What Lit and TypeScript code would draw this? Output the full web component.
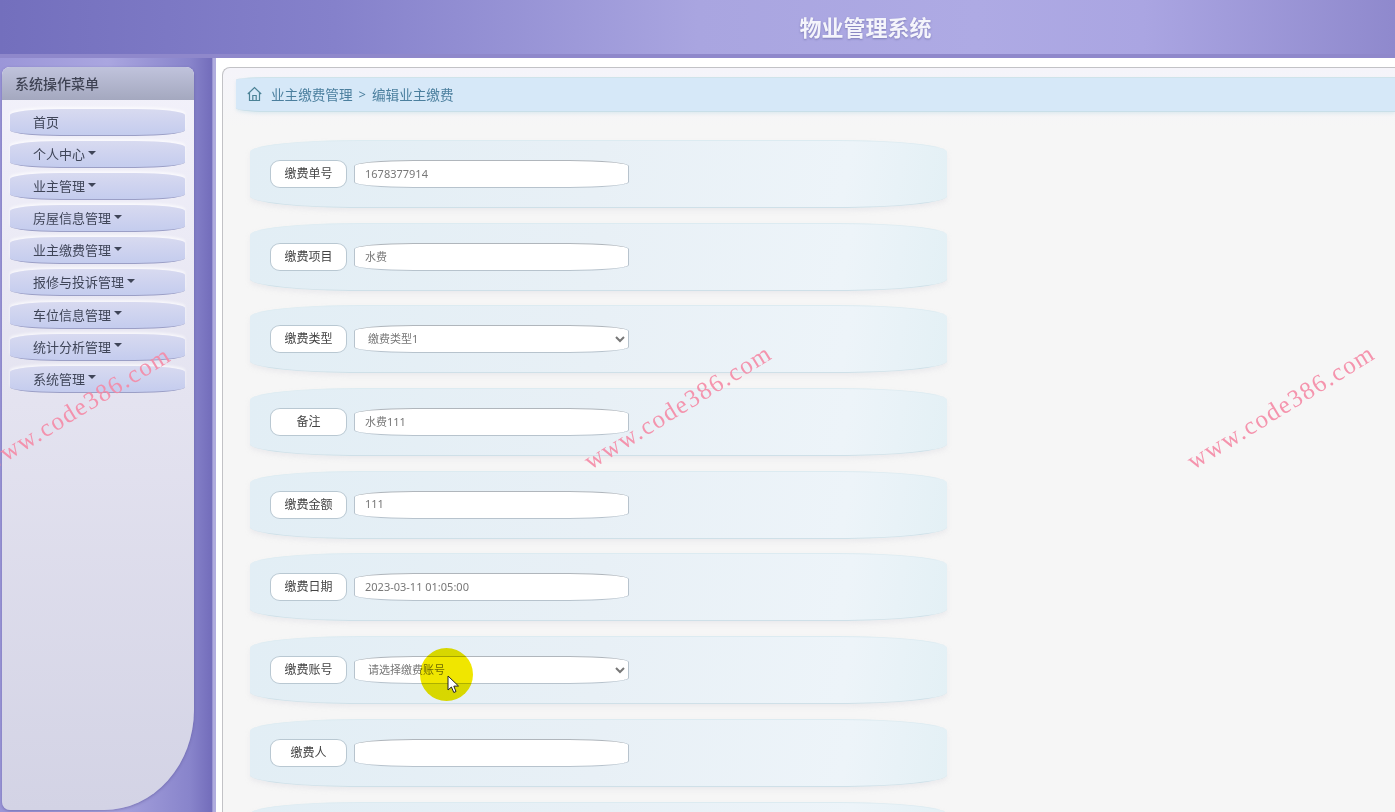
import { LitElement, html, css } from "lit";
import { customElement } from "lit/decorators.js";

const menu = [
  ["首页", false],
  ["个人中心", true],
  ["业主管理", true],
  ["房屋信息管理", true],
  ["业主缴费管理", true],
  ["报修与投诉管理", true],
  ["车位信息管理", true],
  ["统计分析管理", true],
  ["系统管理", true],
] as [string, boolean][];

type Field = { label?: string; value?: string; options?: string };
const fields: Field[] = [
  { label: "缴费单号", value: "1678377914" },
  { label: "缴费项目", value: "水费" },
  { label: "缴费类型", options: "缴费类型1" },
  { label: "备注", value: "水费111" },
  { label: "缴费金额", value: "111" },
  { label: "缴费日期", value: "2023-03-11 01:05:00" },
  { label: "缴费账号", options: "请选择缴费账号" },
  { label: "缴费人", value: "" },
  {},
];

@customElement("app-root")
export class AppRoot extends LitElement {
  static styles = css`
    :host {
      display: block;
      position: relative;
      width: 1395px;
      height: 812px;
      overflow: hidden;
      background: #fff;
      font-family: "Noto Sans", "Noto Sans CJK SC", sans-serif;
      color: #444;
    }
    .top {
      height: 54px;
      border-bottom: 4px solid #8f88cb;
      box-sizing: content-box;
      background: linear-gradient(90deg, #736fbd 0%, #8581cb 24%, #a9a5e0 50%, #aeaae4 70%, #aaa5e2 82%, #8f89cd 100%);
      display: flex;
      align-items: center;
      justify-content: center;
      padding-left: 336px;
    }
    .top h1 {
      margin: 0;
      font-size: 22px;
      line-height: 54px;
      font-weight: 700;
      color: #f4f4fb;
      text-shadow: 0 1px 2px rgba(70, 70, 130, 0.45);
    }
    .body {
      display: flex;
      height: 754px;
    }
    .side {
      width: 216px;
      flex: none;
      box-sizing: border-box;
      padding: 9px 0 0 2px;
      background: linear-gradient(90deg, #9b96d8 0%, #aaa6e0 50%, #8884cb 88%, #736dbb 98%, #b0acde 98.6%);
    }
    .panel {
      width: 192px;
      height: 743px;
      border-radius: 8px 8px 90px 8px / 8px 8px 100px 8px;
      background: linear-gradient(180deg, #f3f2fb 0%, #e4e3f0 45%, #d3d3e5 100%);
      box-shadow: 0 1px 3px rgba(70, 65, 130, 0.45);
      overflow: hidden;
    }
    .panel h2 {
      margin: 0;
      height: 33px;
      line-height: 34px;
      padding-left: 13px;
      font-size: 14px;
      font-weight: 500;
      color: #3f4354;
      background: linear-gradient(180deg, #c0c3dc 0%, #a4a8bf 100%);
    }
    nav {
      display: flex;
      flex-direction: column;
      gap: 5.1px;
      padding: 9px 9px 0 8px;
    }
    .item {
      height: 27px;
      line-height: 26px;
      padding-left: 23px;
      font-size: 13px;
      color: #3f4558;
      border-radius: 50px / 6px;
      background: linear-gradient(180deg, #d8daf0 0%, #c4ccee 100%);
      border-bottom: 1px solid #9b9fc6;
      box-shadow: 0 -2px 3px rgba(255, 255, 255, 0.7);
      box-sizing: border-box;
      display: flex;
      align-items: center;
      gap: 3px;
    }
    .caret {
      width: 0;
      height: 0;
      border-left: 4px solid transparent;
      border-right: 4px solid transparent;
      border-top: 4px solid #3f4558;
      margin-top: -3px;
    }
    .main {
      flex: 1;
      min-width: 0;
      padding: 9px 0 0 6px;
      background: #fff;
    }
    .card {
      height: 800px;
      box-sizing: border-box;
      border: 1px solid #c2c2c6;
      border-right: none;
      border-radius: 8px 0 0 0;
      background: linear-gradient(180deg, #f5f4fa 0, #f6f6f6 60px);
      padding: 9px 0 0 13px;
    }
    .crumb {
      height: 35px;
      display: flex;
      align-items: center;
      border-radius: 30px 0 0 30px / 3px 0 0 4px;
      background: #d6e8f8;
      border-top: 1px solid #cfe3ea;
      border-bottom: 1px solid #c9dfe8;
      box-shadow: 0 2px 3px rgba(205, 225, 235, 0.5);
      box-sizing: border-box;
      padding: 0 0 2px 11px;
      font-size: 13.6px;
      color: #4b7f9e;
    }
    .crumb svg {
      margin-right: 9px;
    }
    .crumb .sep {
      margin: 0 6px;
      font-size: 13px;
    }
    form {
      margin: 28px 0 0 14px;
      width: 697px;
      display: flex;
      flex-direction: column;
      gap: 14.7px;
    }
    .row {
      height: 68px;
      flex: none;
      box-sizing: border-box;
      display: flex;
      align-items: center;
      gap: 7px;
      padding: 0 0 0 20px;
      border-radius: 110px / 12px;
      background: linear-gradient(100deg, #e2eef5 0%, #e8f0f6 50%, #edf4f9 85%, #e3f0f5 100%);
      border-top: 1px solid #dcebf1;
      border-bottom: 1px solid #cfe0e8;
      box-shadow: 0 3px 4px rgba(225, 225, 232, 0.55);
    }
    .label {
      width: 77px;
      height: 28px;
      line-height: 26px;
      box-sizing: border-box;
      text-align: center;
      font-size: 12px;
      color: #444;
      background: #fff;
      border: 1px solid #b9c8d2;
      border-radius: 10px / 9px;
      flex: none;
    }
    input,
    select {
      width: 275px;
      height: 28px;
      box-sizing: border-box;
      background: #fff;
      border: 1px solid #b7c3cd;
      border-top-color: #b0b6bc;
      border-radius: 60px / 6px;
      font: 11px "Noto Sans", "Noto Sans CJK SC", sans-serif;
      color: #777;
      padding: 0 10px 2px;
      outline: none;
      flex: none;
    }
    select {
      padding-left: 9px;
    }
    .wm {
      position: absolute;
      font: 25px "Liberation Serif", serif;
      letter-spacing: 1.5px;
      color: #f58aa6;
      white-space: nowrap;
      transform: translate(-50%, -50%) rotate(-31.5deg);
      pointer-events: none;
      opacity: 0.9;
    }
    .spot {
      position: absolute;
      left: 420px;
      top: 648px;
      width: 53px;
      height: 53px;
      border-radius: 50%;
      background: #f0e600;
      mix-blend-mode: multiply;
    }
    .cursor {
      position: absolute;
      left: 447px;
      top: 675px;
    }
  `;

  render() {
    return html`
      <header class="top"><h1>物业管理系统</h1></header>
      <div class="body">
        <aside class="side">
          <div class="panel">
            <h2>系统操作菜单</h2>
            <nav>
              ${menu.map(
                ([t, c]) => html`<div class="item">${t}${c ? html`<span class="caret"></span>` : ""}</div>`
              )}
            </nav>
          </div>
        </aside>
        <main class="main">
          <div class="card">
            <div class="crumb">
              <svg width="15" height="16" viewBox="0 0 15 16" fill="none" stroke="#4b8296" stroke-width="1.2">
                <path d="M0.8 8 L7.5 1.5 L14.2 8" />
                <path d="M2.5 6.8 V14.5 H12.5 V6.8" />
                <path d="M5.8 14.5 V9.5 H9.2 V14.5" />
              </svg>
              <span>业主缴费管理</span><span class="sep">&gt;</span><span>编辑业主缴费</span>
            </div>
            <form>
              ${fields.map(
                (f) => html`<div class="row">
                  ${f.label ? html`<span class="label">${f.label}</span>` : ""}
                  ${f.label
                    ? f.options
                      ? html`<select><option>${f.options}</option></select>`
                      : html`<input type="text" .value=${f.value ?? ""} />`
                    : ""}
                </div>`
              )}
            </form>
          </div>
        </main>
      </div>
      <div class="wm" style="left:77px;top:409px">www.code386.com</div>
      <div class="wm" style="left:678px;top:407px">www.code386.com</div>
      <div class="wm" style="left:1281px;top:407px">www.code386.com</div>
      <div class="spot"></div>
      <svg class="cursor" width="13" height="19" viewBox="0 0 13 19">
        <path d="M1 1 V15 L4.4 12 L6.8 17.5 L9 16.5 L6.8 11.2 L11.5 11 Z" fill="#fff" stroke="#222" stroke-width="1" />
      </svg>
    `;
  }
}
